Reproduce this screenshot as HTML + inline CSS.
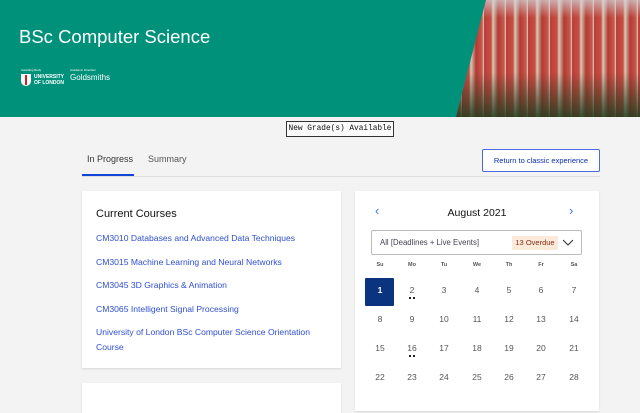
<!DOCTYPE html>
<html><head><meta charset="utf-8"><style>
*{margin:0;padding:0;box-sizing:border-box}
body{width:640px;height:400px;overflow:hidden;background:#f3f3f3;font-family:"Liberation Sans",sans-serif;position:relative}
.hdr{position:absolute;left:0;top:0;width:640px;height:117px;background:#00917b;overflow:hidden}
.photo{position:absolute;left:0;top:0;width:640px;height:117px;clip-path:polygon(486px 0,640px 0,640px 117px,456px 117px);
background:repeating-linear-gradient(90deg,#b8403a 0,#c84c44 7px,#d6cbb4 9px,#b23a34 14px,#c9584c 20px,#ddd3c0 22px),#b84038}
.photo2{position:absolute;left:0;top:0;width:640px;height:117px;clip-path:polygon(486px 0,640px 0,640px 117px,456px 117px);
background:linear-gradient(180deg,rgba(210,215,220,.7) 0,rgba(0,0,0,0) 15%,rgba(0,0,0,0) 62%,rgba(30,60,30,.85) 100%),linear-gradient(90deg,rgba(30,60,30,.8) 0,rgba(30,60,30,.5) 8%,rgba(0,0,0,0) 15%)}
.title{position:absolute;left:19px;top:26px;color:#fff;font-size:18.5px}
.sm{position:absolute;color:#fff;font-size:3px}
.uol{position:absolute;left:34px;top:74px;color:#fff;font-size:5px;line-height:6px;font-weight:bold}
.gold{position:absolute;left:70px;top:73px;color:#fff;font-size:8px}
.crest{position:absolute;left:21px;top:74px;width:10px;height:12px;background:#fff;border-radius:0 0 5px 5px}
.crest:after{content:"";position:absolute;left:4px;top:1px;width:2px;height:10px;background:#c22}
.grade{position:absolute;left:286px;top:121px;width:108px;height:16px;border:1px solid #333;background:#fafafa;font-family:"Liberation Mono",monospace;font-size:7.8px;line-height:14px;text-align:center;color:#111;white-space:nowrap;overflow:hidden}
.tab{position:absolute;top:154px;font-size:9px;color:#333}
.line{position:absolute;left:82px;top:176px;width:518px;height:1px;background:#ddd}
.ul{position:absolute;left:82px;top:174px;width:52px;height:2px;background:#1346d8}
.btn{position:absolute;left:482px;top:149px;width:118px;height:23px;border:1px solid #4a6be0;border-radius:2px;background:#fff;color:#0a2fb0;font-size:7.5px;text-align:center;line-height:21px;white-space:nowrap}
.card{position:absolute;background:#fff;box-shadow:0 1px 2px rgba(0,0,0,.12)}
.ct{position:absolute;left:14px;top:17px;font-size:11px;color:#111}
.lk{position:absolute;left:14px;font-size:8.6px;color:#2f4fd0;line-height:15px;width:230px}
.mon{position:absolute;left:0;width:244px;top:16px;text-align:center;font-size:10.5px;color:#111}
.arr{position:absolute;top:12px;color:#3a78e8;font-size:13px}
.sel{position:absolute;left:16px;top:39px;width:211px;height:25px;border:1px solid #bbb;border-radius:2px}
.sel span{position:absolute;left:8px;top:7px;font-size:7.8px;color:#445}
.od{position:absolute;left:140px;top:5px;height:14px;width:46px;background:#fbe9da;color:#8a2a12;font-size:7.5px;line-height:14px;text-align:center}
.cell{position:absolute;width:30px;text-align:center;font-size:8.5px;color:#555;margin-left:-15px}
.dh{font-size:5.5px;color:#555;font-weight:bold}
.dot{position:absolute;left:12px;top:12px;width:6px;height:2px;border-left:2px solid #222;border-right:2px solid #222}
</style></head><body>
<div class="hdr">
<div class="photo"></div><div class="photo2"></div>
<div class="title">BSc Computer Science</div>
<div class="sm" style="left:21px;top:68px">Awarding Body</div>
<div class="sm" style="left:70px;top:68px">Academic Direction</div>
<div class="crest"></div>
<div class="uol">UNIVERSITY<br>OF LONDON</div>
<div class="gold">Goldsmiths</div>
</div>
<div class="grade">New Grade(s) Available</div>
<div class="tab" style="left:87px">In Progress</div>
<div class="tab" style="left:148px;color:#555">Summary</div>
<div class="line"></div><div class="ul"></div>
<div class="btn">Return to classic experience</div>
<div class="card" style="left:82px;top:191px;width:259px;height:177px">
<div class="ct">Current Courses</div>
<div class="lk" style="top:40px">CM3010 Databases and Advanced Data Techniques</div>
<div class="lk" style="top:64px">CM3015 Machine Learning and Neural Networks</div>
<div class="lk" style="top:87px">CM3045 3D Graphics &amp; Animation</div>
<div class="lk" style="top:111px">CM3065 Intelligent Signal Processing</div>
<div class="lk" style="top:134px">University of London BSc Computer Science Orientation Course</div>
</div>
<div class="card" style="left:82px;top:383px;width:259px;height:30px"></div>
<div class="card" style="left:355px;top:191px;width:244px;height:220px">
<div class="arr" style="left:20px">‹</div><div class="arr" style="left:214px">›</div>
<div class="mon">August 2021</div>
<div class="sel"><span>All [Deadlines + Live Events]</span><div class="od">13 Overdue</div>
<svg style="position:absolute;left:190px;top:8px" width="12" height="8"><path d="M1 1L6 6L11 1" fill="none" stroke="#333" stroke-width="1"/></svg></div>
</div>
<div style="position:absolute;left:365px;top:278px;width:29px;height:28px;background:#0b3480;border-radius:1px"></div>
<div id="cal"></div>
<script>
var xs=[380,412,444,477,509,541,574],h=["Su","Mo","Tu","We","Th","Fr","Sa"],o="";
h.forEach(function(d,i){o+='<div class="cell dh" style="left:'+xs[i]+'px;top:262px">'+d+'</div>'});
var ys=[285,314,343,372];
for(var n=1;n<=28;n++){var r=Math.floor((n-1)/7),c=(n-1)%7;var col=n==1?'#fff;font-weight:bold':'#555';
o+='<div class="cell" style="left:'+xs[c]+'px;top:'+ys[r]+'px;color:'+col+'">'+n+((n==2||n==16)?'<div class="dot"></div>':'')+'</div>';}
document.getElementById('cal').innerHTML=o;
</script>
</body></html>
